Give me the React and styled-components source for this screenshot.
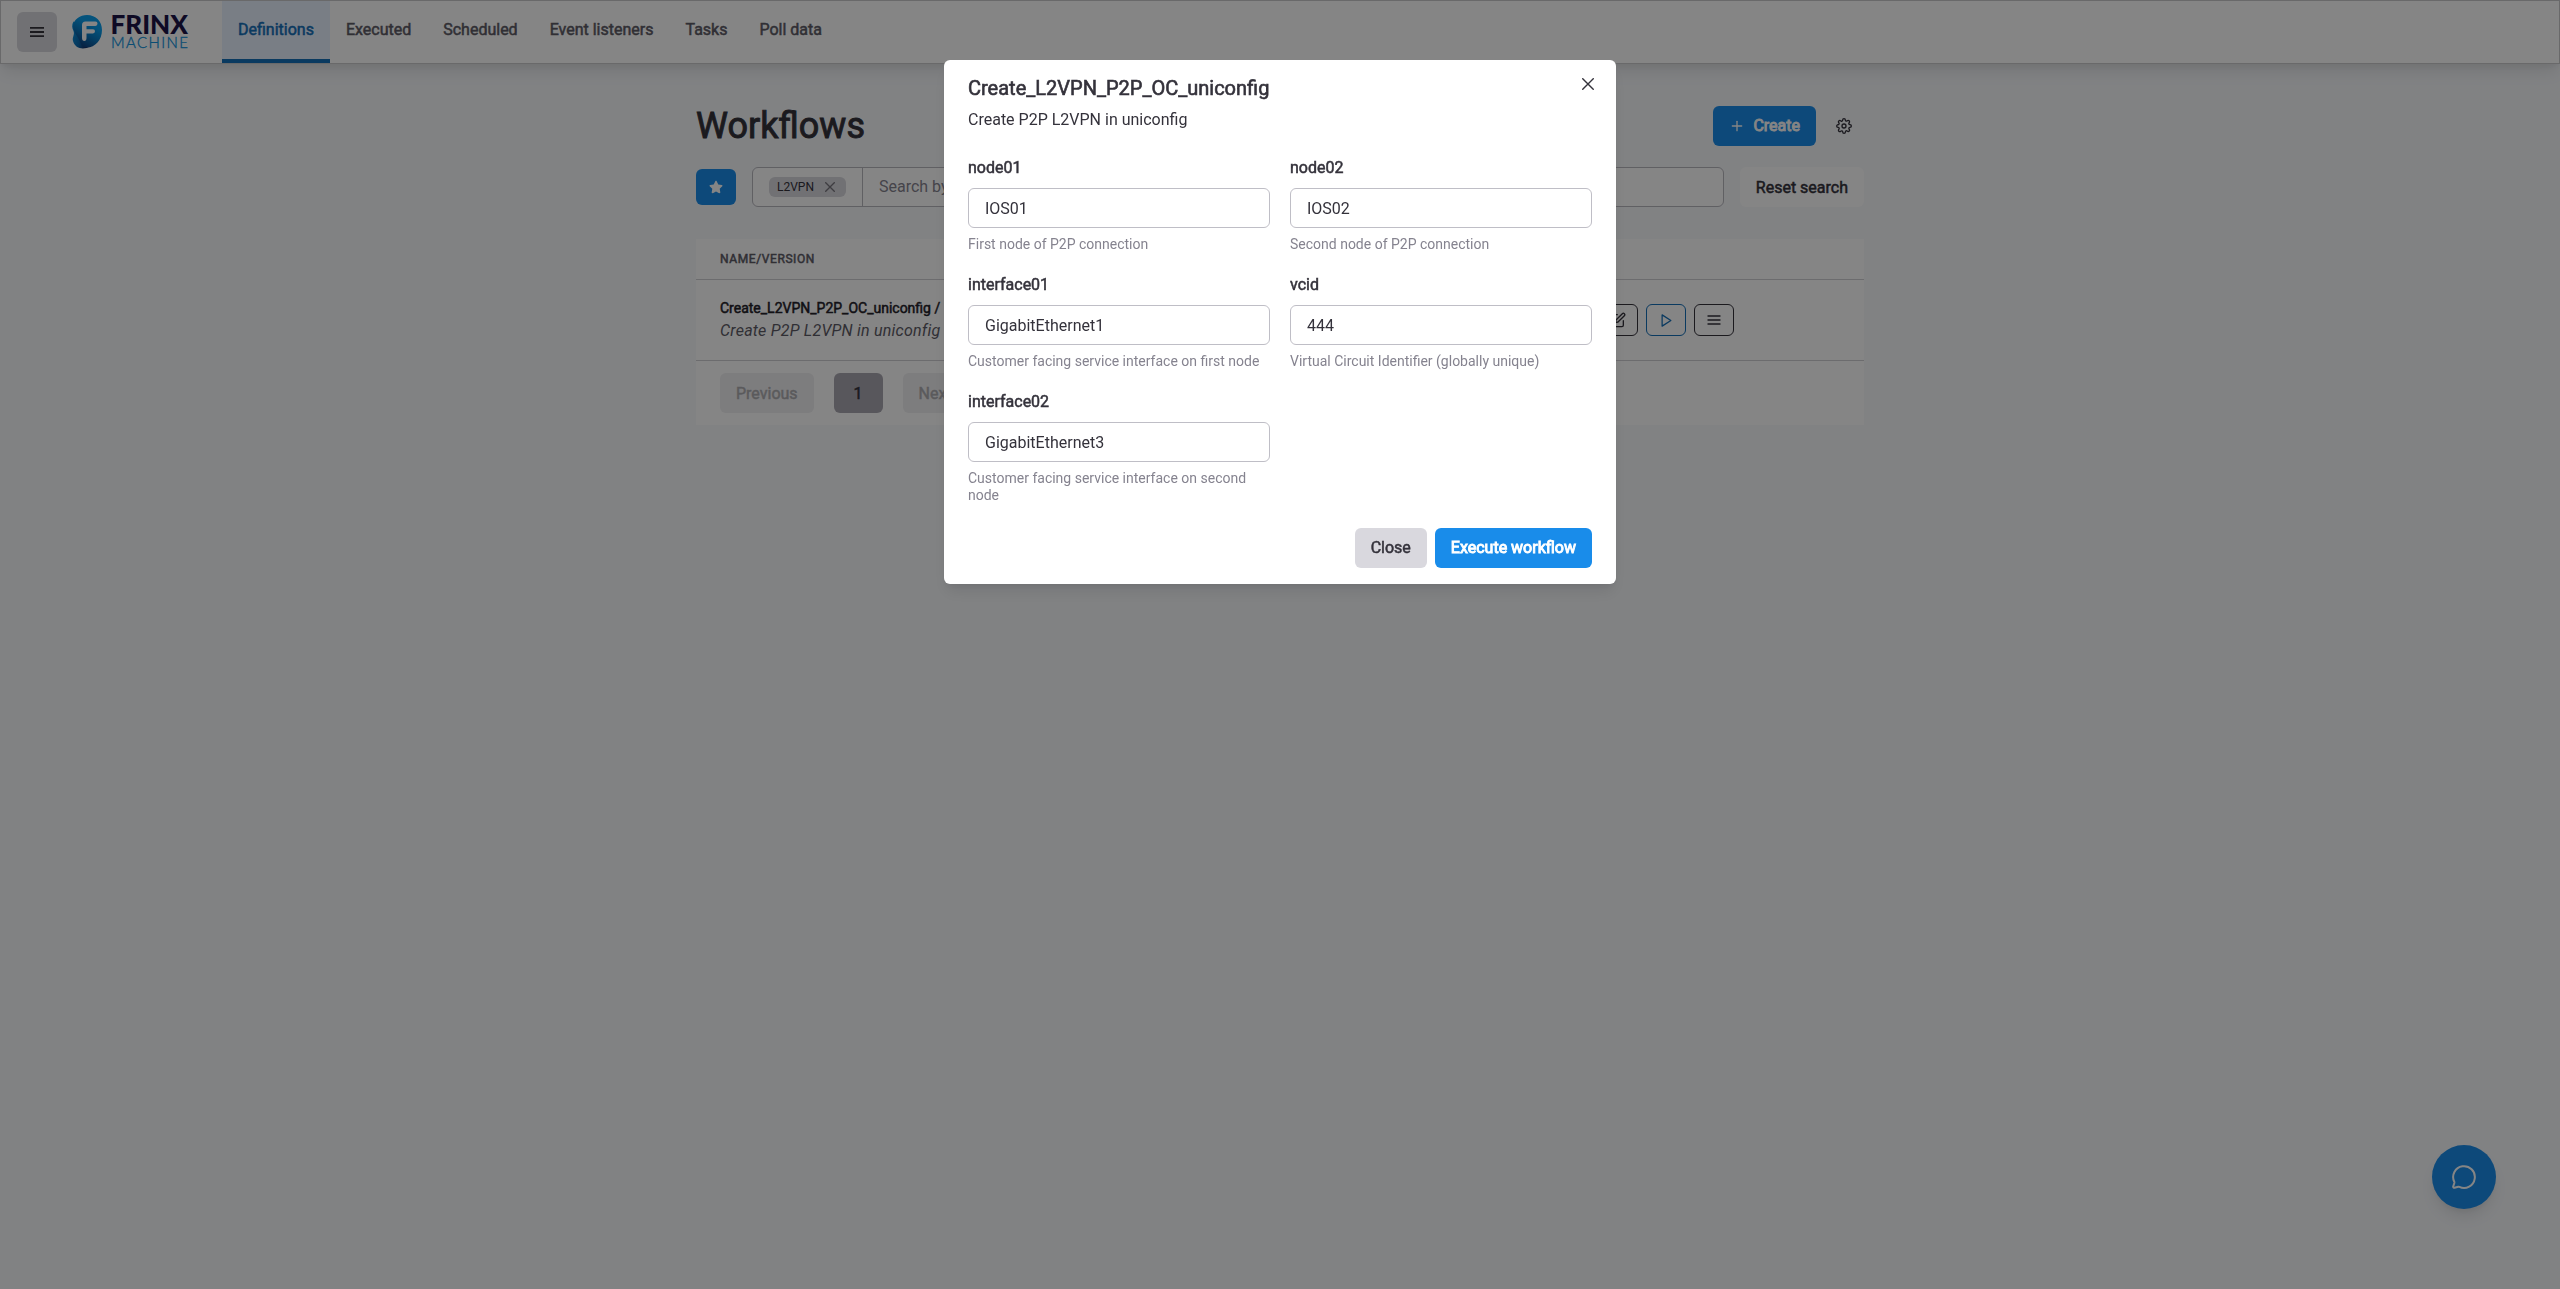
import React from 'react';
import styled, { createGlobalStyle, css } from 'styled-components';
import { FiEdit, FiMenu, FiPlay, FiPlus, FiSettings } from 'react-icons/fi';
import { FaStar } from 'react-icons/fa';

const GlobalStyle = createGlobalStyle`
  *, *::before, *::after { box-sizing: border-box; }
  body {
    margin: 0;
    background: #f7f9fc;
    color: #34323b;
    font-family: Roboto, "Liberation Sans", sans-serif;
    font-size: 16px;
    line-height: 1.5;
    overflow: hidden;
  }
  h1, h2, p { margin: 0; }
  button, input { font: inherit; color: inherit; margin: 0; }
  svg { display: block; flex-shrink: 0; }
`;

const emphasis = css`
  font-weight: 400;
  -webkit-text-stroke: 0.5px currentColor;
`;

const Page = styled.div`
  height: 100vh;
`;

const Header = styled.header`
  display: flex;
  height: 64px;
  padding-left: 16px;
  background: #fff;
  border: 1px solid #c9c9cb;
  box-shadow: 0 10px 15px -3px rgba(0, 0, 0, 0.1), 0 4px 6px -2px rgba(0, 0, 0, 0.05);
`;

const MenuButton = styled.button`
  display: flex;
  align-items: center;
  justify-content: center;
  width: 40px;
  height: 40px;
  margin-top: 11px;
  border: 0;
  border-radius: 6px;
  background: #d9d8de;
`;

const Logo = styled.div`
  display: flex;
  gap: 9px;
  width: 120px;
  margin: 11px 33px 0 12px;
`;

const LogoText = styled.div`
  display: flex;
  flex-direction: column;
  gap: 1px;
  padding-top: 2px;
`;

const LogoLine = styled.svg`
  overflow: visible;
  font-family: Lato, sans-serif;
`;

const Tabs = styled.nav`
  display: flex;
  height: 62px;
`;

const Tab = styled.a`
  display: flex;
  align-items: center;
  padding: 0 16px;
  border-bottom: 4px solid ${(p) => (p.$active ? '#146fb8' : 'transparent')};
  background: ${(p) => (p.$active ? '#e8f1ff' : 'transparent')};
  color: ${(p) => (p.$active ? '#146fb8' : '#5d5b66')};
  ${emphasis}
`;

const Container = styled.main`
  width: 1200px;
  margin: 0 auto;
  padding: 42px 16px 0;
`;

const TitleRow = styled.div`
  display: flex;
  align-items: center;
  justify-content: space-between;
  height: 40px;
`;

const Title = styled.h1`
  font-size: 36px;
  line-height: 43px;
  font-weight: 400;
  -webkit-text-stroke: 0.9px currentColor;
`;

const Actions = styled.div`
  display: flex;
  gap: 8px;
`;

const Button = styled.button`
  display: flex;
  align-items: center;
  justify-content: center;
  gap: 8px;
  height: ${(p) => p.$height || 40}px;
  min-width: 40px;
  padding: ${(p) => (p.$low ? 1 : 0)}px ${(p) => (p.$icon ? 0 : 16)}px 0;
  border: 0;
  border-radius: 6px;
  white-space: nowrap;
  opacity: ${(p) => (p.$disabled ? 0.4 : 1)};
  background: ${(p) =>
    ({ primary: '#198cea', gray: '#d9d8de', active: '#a9a7b1', white: '#fff', ghost: 'transparent' })[p.$tone]};
  color: ${(p) => (p.$tone === 'primary' ? '#fff' : '#34323b')};
  ${emphasis}
  -webkit-text-stroke-width: ${(p) => (p.$tone === 'primary' ? 0.9 : 0.5)}px;
`;

const SearchRow = styled.div`
  display: flex;
  align-items: center;
  gap: 16px;
  margin-top: 21px;
`;

const SearchBox = styled.div`
  display: flex;
  flex: 1;
  height: 40px;
  border: 1px solid #b9b8bf;
  border-radius: 6px;
  background: #fff;
`;

const TagArea = styled.div`
  display: flex;
  align-items: center;
  padding: 0 16px;
  border-right: 1px solid #b9b8bf;
`;

const Tag = styled.span`
  display: flex;
  align-items: center;
  justify-content: space-between;
  width: 77px;
  height: 20px;
  padding: 0 11px 0 8px;
  border-radius: 6px;
  background: #d9d8de;
  font-size: 12px;
  line-height: 20px;
`;

const TagCross = styled.span`
  color: #77757d;
`;

const Placeholder = styled.span`
  padding: 7px 16px 0;
  color: #85838f;
`;

const Table = styled.section`
  margin-top: 32px;
  background: #fff;
`;

const TableHead = styled.div`
  height: 41px;
  padding: 12px 24px;
  border-bottom: 1px solid #d0cfd4;
  color: #5d5b66;
  font-size: 12px;
  line-height: 16px;
  letter-spacing: 0.6px;
  ${emphasis}
`;

const TableRow = styled.div`
  display: flex;
  align-items: center;
  justify-content: space-between;
  height: 81px;
  padding: 0 130px 0 24px;
  border-bottom: 1px solid #d0cfd4;
`;

const WorkflowName = styled.p`
  font-size: 14px;
  line-height: 21px;
  color: #232129;
  ${emphasis}
`;

const WorkflowText = styled.p`
  line-height: 24px;
  font-style: italic;
  letter-spacing: 0.23px;
  color: #5d5b66;
`;

const OutlineButton = styled.button`
  display: flex;
  align-items: center;
  justify-content: center;
  width: 40px;
  height: 32px;
  padding: 0;
  border: 1px solid currentColor;
  border-radius: 6px;
  background: transparent;
  color: ${(p) => (p.$blue ? '#146fb8' : '#34323b')};
`;

const Pagination = styled.div`
  display: flex;
  gap: 20px;
  padding: 12px 24px;
`;

const PageNumber = styled(Button)`
  width: 49px;
`;

const ChatButton = styled.button`
  position: fixed;
  right: 64px;
  bottom: 80px;
  display: flex;
  align-items: center;
  justify-content: center;
  width: 64px;
  height: 64px;
  border: 0;
  border-radius: 50%;
  background: #198cea;
  color: #fff;
  box-shadow: 0 10px 15px -3px rgba(0, 0, 0, 0.1), 0 4px 6px -2px rgba(0, 0, 0, 0.05);
`;

const Overlay = styled.div`
  position: fixed;
  inset: 0;
  display: flex;
  align-items: flex-start;
  justify-content: center;
  padding-top: 60px;
  background: rgba(0, 0, 0, 0.48);
`;

const Dialog = styled.div`
  width: 672px;
  border-radius: 6px;
  background: #fff;
  box-shadow: 0 10px 15px -3px rgba(0, 0, 0, 0.1), 0 4px 6px -2px rgba(0, 0, 0, 0.05);
`;

const DialogHeader = styled.div`
  display: flex;
  justify-content: space-between;
  padding: 16px 22px 16px 24px;
`;

const DialogTitle = styled.h2`
  margin-bottom: 8px;
  font-size: 20px;
  line-height: 24px;
  font-weight: 400;
  -webkit-text-stroke: 0.6px currentColor;
`;

const CloseButton = styled.div`
  margin-top: 2px;
`;

const Form = styled.div`
  display: grid;
  grid-template-columns: 1fr 1fr;
  gap: 20px;
  padding: 8px 24px;
`;

const Field = styled.label`
  display: flex;
  flex-direction: column;
`;

const Label = styled.span`
  margin-bottom: 8px;
  line-height: 24px;
  ${emphasis}
`;

const Input = styled.input`
  height: 40px;
  padding: 0 16px;
  border: 1px solid #bfbec6;
  border-radius: 6px;
  background: #fff;
  outline: 0;
`;

const Hint = styled.span`
  margin-top: 8px;
  font-size: 14px;
  line-height: 17px;
  color: #85838f;
`;

const DialogFooter = styled.div`
  display: flex;
  justify-content: flex-end;
  gap: 8px;
  padding: 16px 24px;
`;

const TABS = ['Definitions', 'Executed', 'Scheduled', 'Event listeners', 'Tasks', 'Poll data'];

const FIELDS = [
  ['node01', 'IOS01', 'First node of P2P connection'],
  ['node02', 'IOS02', 'Second node of P2P connection'],
  ['interface01', 'GigabitEthernet1', 'Customer facing service interface on first node'],
  ['vcid', '444', 'Virtual Circuit Identifier (globally unique)'],
  ['interface02', 'GigabitEthernet3', 'Customer facing service interface on second node'],
];

function FrinxLogo() {
  return (
    <Logo>
      <svg width="34" height="40" viewBox="2 0 34 40">
        <defs>
          <linearGradient id="drop" x1="0.8" y1="0" x2="0.3" y2="1">
            <stop offset="0.3" stopColor="#0aa0ee" />
            <stop offset="0.62" stopColor="#0878c0" />
            <stop offset="1" stopColor="#123a78" />
          </linearGradient>
          <linearGradient id="tail" x1="0" y1="0" x2="1" y2="0.4">
            <stop offset="0" stopColor="#0a9ae6" />
            <stop offset="0.6" stopColor="#0b6ab0" />
            <stop offset="1" stopColor="#16295e" />
          </linearGradient>
        </defs>
        <path d="M6.500 9.500C4.500 13 5 16 6.500 19C8 23 5 25 6 29C8 37 17 38 23 34.500L23 20Z" fill="url(#tail)" />
        <path
          d="M20 3C29 3 35 9.500 35 18C35 28 28 35.500 20 35.500C13 35.500 14 29 10 24C7.500 20.500 6 17 6 14C7 7 13 3 20 3Z"
          fill="url(#drop)"
        />
        <path
          d="M18.500 9.500H28.500Q30.500 9.500 30.500 11.500T28.500 14H19.500V17.200H26Q28 17.200 28 19.300T26 21.500H19.500V26Q19.500 29 17.300 29T15 26V13Q15 9.500 18.500 9.500Z"
          fill="#fff"
        />
      </svg>
      <LogoText>
        <LogoLine width="76" height="20" viewBox="0 0 76 20">
          <text x="-1.500" y="20" textLength="77.500" lengthAdjust="spacingAndGlyphs" fontWeight="900" fontSize="26.500" fill="#1c1548">
            FRINX
          </text>
        </LogoLine>
        <LogoLine width="76" height="14" viewBox="0 0 76 14">
          <text x="-1" y="13" textLength="77" fontWeight="300" fontSize="15" fill="#1593dc" stroke="#1593dc" strokeWidth="0.350">
            MACHINE
          </text>
        </LogoLine>
      </LogoText>
    </Logo>
  );
}

function Cross({ size, width }) {
  return (
    <svg width={size} height={size} viewBox="0 0 12 12" fill="none" stroke="currentColor" strokeWidth={width}>
      <path d="M0.300 0.300L11.700 11.700M11.700 0.300L0.300 11.700" />
    </svg>
  );
}

export default function App() {
  return (
    <>
      <GlobalStyle />
      <Page>
        <Header>
          <MenuButton>
            <svg width="14" height="10" viewBox="0 0 14 10" fill="currentColor">
              <path d="M0 0h14v1.800H0zM0 4.100h14v1.800H0zM0 8.200h14V10H0z" />
            </svg>
          </MenuButton>
          <FrinxLogo />
          <Tabs>
            {TABS.map((name, i) => (
              <Tab key={name} $active={i === 0}>
                {name}
              </Tab>
            ))}
          </Tabs>
        </Header>

        <Container>
          <TitleRow>
            <Title>Workflows</Title>
            <Actions>
              <Button $tone="primary">
                <FiPlus size={16} />
                Create
              </Button>
              <Button $tone="ghost" $icon>
                <FiSettings size={16} />
              </Button>
            </Actions>
          </TitleRow>

          <SearchRow>
            <Button $tone="primary" $icon $height={36}>
              <FaStar size={14} />
            </Button>
            <SearchBox>
              <TagArea>
                <Tag>
                  L2VPN
                  <TagCross>
                    <Cross size={10} width={1.6} />
                  </TagCross>
                </Tag>
              </TagArea>
              <Placeholder>Search by keyword</Placeholder>
            </SearchBox>
            <Button $tone="white" $low>
              Reset search
            </Button>
          </SearchRow>

          <Table>
            <TableHead>NAME/VERSION</TableHead>
            <TableRow>
              <div>
                <WorkflowName>Create_L2VPN_P2P_OC_uniconfig / 1</WorkflowName>
                <WorkflowText>Create P2P L2VPN in uniconfig</WorkflowText>
              </div>
              <Actions>
                <OutlineButton>
                  <FiEdit size={16} />
                </OutlineButton>
                <OutlineButton $blue>
                  <FiPlay size={15} />
                </OutlineButton>
                <OutlineButton>
                  <FiMenu size={16} />
                </OutlineButton>
              </Actions>
            </TableRow>
            <Pagination>
              <Button $tone="gray" $disabled $low>
                Previous
              </Button>
              <PageNumber $tone="active" $low>
                1
              </PageNumber>
              <Button $tone="gray" $disabled $low>
                Next
              </Button>
            </Pagination>
          </Table>
        </Container>

        <ChatButton>
          <svg width="26" height="26" viewBox="0 0 24 24" fill="none" stroke="currentColor" strokeWidth="1.850" strokeLinecap="round" strokeLinejoin="round">
            <path d="M2.992 16.342a2 2 0 0 1 .094 1.167l-1.065 3.290a1 1 0 0 0 1.236 1.168l3.413-.998a2 2 0 0 1 1.099.092 10 10 0 1 0-4.777-4.719" />
          </svg>
        </ChatButton>
      </Page>

      <Overlay>
        <Dialog>
          <DialogHeader>
            <div>
              <DialogTitle>Create_L2VPN_P2P_OC_uniconfig</DialogTitle>
              <p>Create P2P L2VPN in uniconfig</p>
            </div>
            <CloseButton>
              <Cross size={12} width={1.4} />
            </CloseButton>
          </DialogHeader>
          <Form>
            {FIELDS.map(([name, value, hint]) => (
              <Field key={name}>
                <Label>{name}</Label>
                <Input defaultValue={value} />
                <Hint>{hint}</Hint>
              </Field>
            ))}
          </Form>
          <DialogFooter>
            <Button $tone="gray">Close</Button>
            <Button $tone="primary">Execute workflow</Button>
          </DialogFooter>
        </Dialog>
      </Overlay>
    </>
  );
}
